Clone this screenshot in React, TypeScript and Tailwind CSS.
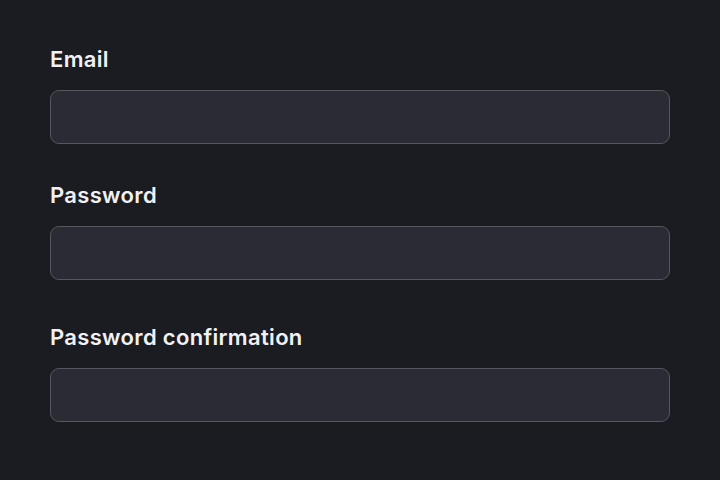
import React from 'react';

const Field: React.FC<{ label: string; type: string; className?: string }> = ({ label, type, className }) => (
  <div className={className}>
    <label className="block text-[22px] leading-[28px] font-semibold tracking-[0.015em] text-[#f1f1f3]">{label}</label>
    <input
      type={type}
      className="mt-[17px] block w-full h-[54px] rounded-[9px] border border-[#56565f] bg-[#2b2b35] px-4 text-[#f1f1f3] outline-none"
    />
  </div>
);

const App: React.FC = () => {
  return (
    <div className="min-h-[480px] w-[720px] bg-[#1b1c21] px-[50px] pt-[45px]" style={{ fontFamily: 'Inter, "Noto Sans", sans-serif' }}>
      <Field label="Email" type="email" />
      <Field label="Password" type="password" className="mt-[37px]" />
      <Field label="Password confirmation" type="password" className="mt-[43px]" />
    </div>
  );
};

export default App;
